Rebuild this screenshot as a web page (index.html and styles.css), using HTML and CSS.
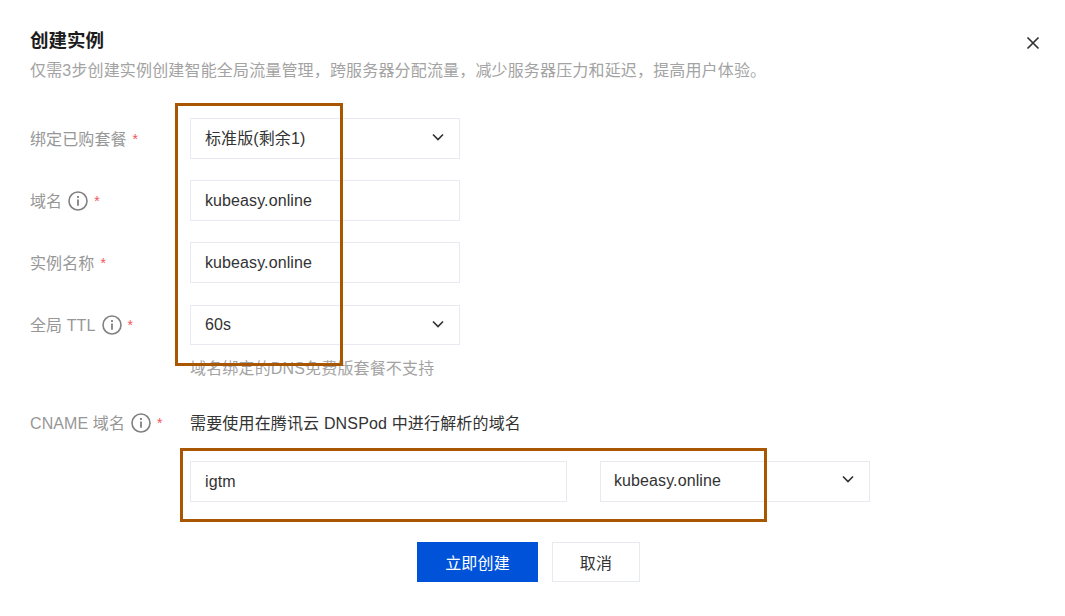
FILE: index.html
```html
<!DOCTYPE html>
<html lang="en">
<head>
    <meta charset="UTF-8">
    <meta name="viewport" content="width=device-width, initial-scale=1.0">
    <title>创建实例</title>
    <link rel="stylesheet" href="styles.css">
</head>
<body>
    <div class="dialog">
        <div class="dialog-head">
            <h1>创建实例</h1>
            <svg class="close" width="14" height="14" viewBox="0 0 14 14"><path d="M1.5 1.5l11 11M12.5 1.5l-11 11" stroke="#333" stroke-width="1.7" fill="none"/></svg>
        </div>
        <p class="intro">仅需3步创建实例创建智能全局流量管理，跨服务器分配流量，减少服务器压力和延迟，提高用户体验。</p>

        <div class="form">
            <div class="row">
                <div class="label">绑定已购套餐<span class="req">*</span></div>
                <div class="field select plan">标准版(剩余1)
                    <svg class="arrow" width="14" height="14" viewBox="0 0 14 14"><path d="M2 4.5L7 9.5l5-5" stroke="#333" stroke-width="1.7" fill="none"/></svg>
                </div>
            </div>
            <div class="row">
                <div class="label">域名
                    <svg class="info" width="20" height="20" viewBox="0 0 20 20"><circle cx="10" cy="10" r="9" stroke="#808080" stroke-width="1.6" fill="none"/><path d="M10 8.5v6.3M10 5v2" stroke="#808080" stroke-width="1.8"/></svg>
                    <span class="req">*</span></div>
                <div class="field">kubeasy.online</div>
            </div>
            <div class="row">
                <div class="label">实例名称<span class="req">*</span></div>
                <div class="field">kubeasy.online</div>
            </div>
            <div class="row row-ttl">
                <div class="label">全局 TTL
                    <svg class="info" width="20" height="20" viewBox="0 0 20 20"><circle cx="10" cy="10" r="9" stroke="#808080" stroke-width="1.6" fill="none"/><path d="M10 8.5v6.3M10 5v2" stroke="#808080" stroke-width="1.8"/></svg>
                    <span class="req">*</span></div>
                <div class="field select short">60s
                    <svg class="arrow" width="14" height="14" viewBox="0 0 14 14"><path d="M2 4.5L7 9.5l5-5" stroke="#333" stroke-width="1.7" fill="none"/></svg>
                </div>
            </div>
            <p class="hint">域名绑定的DNS免费版套餐不支持</p>
            <div class="row cname">
                <div class="label">CNAME 域名
                    <svg class="info" width="20" height="20" viewBox="0 0 20 20"><circle cx="10" cy="10" r="9" stroke="#808080" stroke-width="1.6" fill="none"/><path d="M10 8.5v6.3M10 5v2" stroke="#808080" stroke-width="1.8"/></svg>
                    <span class="req">*</span></div>
                <div class="desc">需要使用在腾讯云 DNSPod 中进行解析的域名</div>
            </div>
            <div class="pair">
                <div class="field wide">igtm</div>
                <div class="field select suffix">kubeasy.online
                    <svg class="arrow" width="14" height="14" viewBox="0 0 14 14"><path d="M2 4.5L7 9.5l5-5" stroke="#333" stroke-width="1.7" fill="none"/></svg>
                </div>
            </div>
        </div>

        <div class="actions">
            <button class="btn primary">立即创建</button>
            <button class="btn">取消</button>
        </div>

        <!-- annotation boxes drawn over the screenshot -->
        <div class="mark mark-a"></div>
        <div class="mark mark-b"></div>
    </div>
</body>
</html>
```

FILE: styles.css
```css
* {
    box-sizing: border-box;
}
body {
    margin: 0;
    background: #fff;
    font-family: "Liberation Sans", "Noto Sans CJK SC", sans-serif;
    font-size: 16px;
    letter-spacing: .16px;
    color: #333;
}
.dialog {
    position: relative;
    width: 1065px;
    height: 616px;
    padding: 27px 25px 0 30px;
    overflow: hidden;
}
.dialog-head {
    display: flex;
    justify-content: space-between;
    align-items: center;
    height: 24px;
}
.close {
    margin-top: 7px;
}
h1 {
    margin: 0;
    font-size: 18.5px;
    font-weight: 700;
    letter-spacing: 0;
    color: #1c1c1c;
}
.intro {
    margin: 8px 0 0;
    line-height: 24px;
    color: #a3a3a3;
}
.form {
    margin-top: 35px;
}
.row {
    display: flex;
    align-items: center;
    margin-bottom: 21px;
}
.label {
    display: flex;
    align-items: center;
    width: 160px;
    padding-bottom: 2px;
    white-space: nowrap;
    letter-spacing: .1px;
    color: #979797;
}
.info {
    margin-left: 6px;
    margin-top: 2px;
}
.req {
    margin-left: 6px;
    margin-top: 2px;
    font-size: 14px;
    color: #f4535d;
}
.desc {
    padding-bottom: 2px;
}
.field {
    position: relative;
    display: flex;
    align-items: center;
    width: 270px;
    height: 41px;
    padding-left: 14px;
    border: 1.5px solid #e8eaf1;
    background: #fff;
    letter-spacing: .1px;
}
.field.plan {
    padding-bottom: 3px;
}
.field.suffix {
    padding-left: 13px;
    padding-bottom: 2px;
}
.arrow {
    position: absolute;
    right: 14px;
    top: 11px;
}
.field.suffix .arrow {
    top: 10px;
}
.row-ttl {
    margin-top: 22px;
}
.field.short {
    height: 40px;
}
.hint {
    margin: -9px 0 0 160px;
    line-height: 24px;
    color: #a3a3a3;
}
.row.cname {
    margin: 30px 0 0;
    height: 24px;
}
.pair {
    display: flex;
    gap: 33px;
    margin: 26px 0 0 160px;
}
.field.wide {
    width: 377px;
}
.actions {
    display: flex;
    justify-content: center;
    gap: 14px;
    margin-top: 40px;
    padding-right: 13px;
}
.btn {
    height: 40px;
    width: 88px;
    border: 1.5px solid #e8eaf1;
    background: #fff;
    font: inherit;
    letter-spacing: inherit;
    color: #333;
}
.btn.primary {
    width: 121px;
    border-color: #0052d9;
    background: #0052d9;
    color: #fff;
}
.mark {
    position: absolute;
    border: 3px solid #a85600;
    pointer-events: none;
}
.mark-a {
    left: 175px;
    top: 103px;
    width: 168px;
    height: 263px;
}
.mark-b {
    left: 180px;
    top: 448px;
    width: 587px;
    height: 74px;
}
```
